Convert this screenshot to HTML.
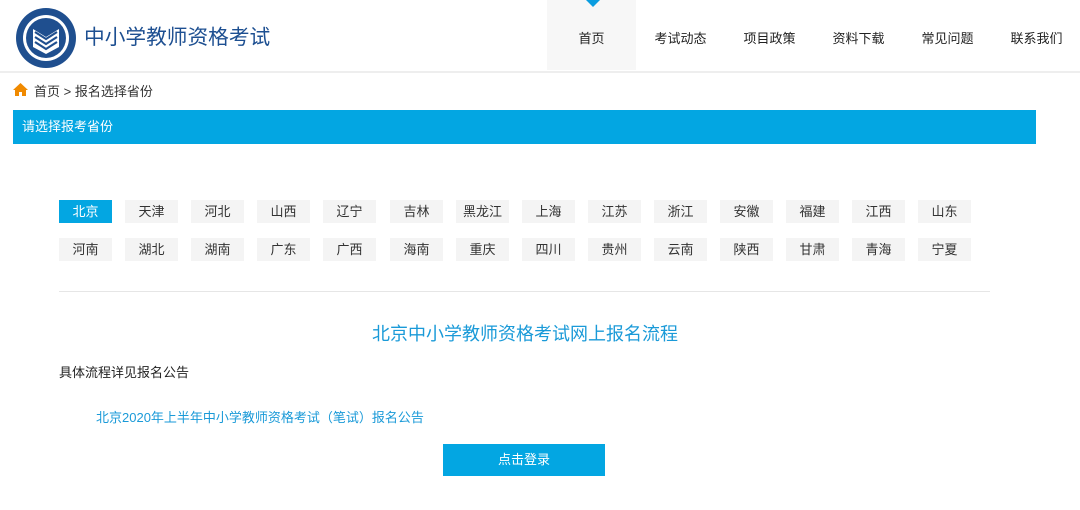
<!DOCTYPE html>
<html><head><meta charset="utf-8"><style>
*{margin:0;padding:0;box-sizing:border-box}
body{width:1080px;height:510px;background:#fff;font-family:"Liberation Sans","Noto Sans CJK SC",sans-serif;position:relative;overflow:hidden;color:#333}
.abs{position:absolute}
.nav a{position:absolute;top:0;height:70px;width:89px;text-align:center;line-height:77px;font-size:13px;color:#222}
.pv{position:absolute;width:53px;height:23px;background:#f4f4f4;text-align:center;line-height:23px;font-size:13px;color:#333}
</style></head><body>
<svg class="abs" style="left:15px;top:7px" width="62" height="62" viewBox="0 0 62 62">
<circle cx="31" cy="31" r="30" fill="#1f4f8f"/>
<circle cx="31" cy="31" r="23" fill="#fff"/>
<circle cx="31" cy="31" r="20" fill="#1f4f8f"/>
<path d="M18 22 L31 30 L44 22 L44 40 L31 47 L18 40Z" fill="#fff"/>
<path d="M20 25 L31 32 L42 25 M20 30 L31 37 L42 30 M20 35 L31 42 L42 35" stroke="#1f4f8f" stroke-width="2.2" fill="none"/>
</svg>
<div class="abs" style="left:84px;top:20px;font-size:20.7px;color:#1d4f91">中小学教师资格考试</div>
<div class="abs" style="left:547px;top:0;width:89px;height:70px;background:#f7f7f7"></div>
<div class="abs" style="left:586px;top:0;width:0;height:0;border-left:7px solid transparent;border-right:7px solid transparent;border-top:7px solid #0a9de0"></div>
<div class="nav"><a style="left:547px">首页</a><a style="left:636px">考试动态</a><a style="left:725px">项目政策</a><a style="left:814px">资料下载</a><a style="left:903px">常见问题</a><a style="left:992px">联系我们</a></div>
<div class="abs" style="left:0;top:71px;width:1080px;height:2px;background:#eee"></div>
<svg class="abs" style="left:13px;top:83px" width="15" height="13" viewBox="0 0 15 13"><path d="M7.5 0 L15 7 L13 7 L13 13 L9 13 L9 9 L6 9 L6 13 L2 13 L2 7 L0 7Z" fill="#f08a00"/></svg>
<div class="abs" style="left:34px;top:81px;font-size:13px;color:#333">首页 &gt; 报名选择省份</div>
<div class="abs" style="left:13px;top:110px;width:1023px;height:34px;background:#03a6e2;color:#fff;font-size:13px;line-height:33px;padding-left:9px">请选择报考省份</div>
<div id="pv"></div>
<div class="abs" style="left:59px;top:291px;width:931px;height:1px;background:#e6e6e6"></div>
<div class="abs" style="left:0;top:320px;width:1050px;text-align:center;font-size:18px;color:#1a9ad8">北京中小学教师资格考试网上报名流程</div>
<div class="abs" style="left:59px;top:362px;font-size:13px;color:#222">具体流程详见报名公告</div>
<div class="abs" style="left:96px;top:407px;font-size:13px;color:#1a9ad8">北京2020年上半年中小学教师资格考试（笔试）报名公告</div>
<div class="abs" style="left:443px;top:444px;width:162px;height:32px;background:#03a6e2;color:#fff;font-size:13px;text-align:center;line-height:32px">点击登录</div>
<script>
var r1="北京 天津 河北 山西 辽宁 吉林 黑龙江 上海 江苏 浙江 安徽 福建 江西 山东".split(" ");
var r2="河南 湖北 湖南 广东 广西 海南 重庆 四川 贵州 云南 陕西 甘肃 青海 宁夏".split(" ");
var h="";
[r1,r2].forEach(function(r,j){r.forEach(function(n,i){
var s="left:"+Math.round(59+i*66.1)+"px;top:"+(200+j*38)+"px;";
if(j==0&&i==0)s+="background:#03a6e2;color:#fff;";
h+='<div class="pv" style="'+s+'">'+n+'</div>';});});
document.getElementById("pv").innerHTML=h;
</script>
</body></html>
